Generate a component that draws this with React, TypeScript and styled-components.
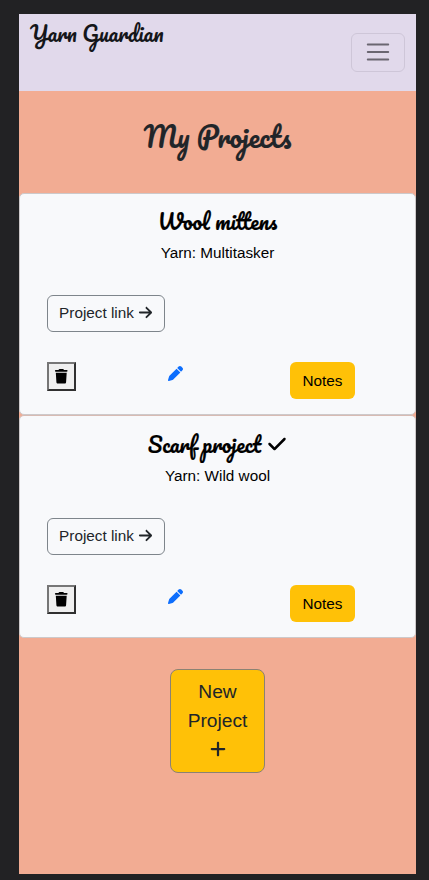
import React from 'react';
import styled, { createGlobalStyle } from 'styled-components';
import { FaArrowRight, FaCheck, FaPen, FaPlus, FaTrash } from 'react-icons/fa6';

const GlobalStyle = createGlobalStyle`
  *, *::before, *::after { box-sizing: border-box; }
  body {
    margin: 0;
    background: #222224;
    font-family: 'Liberation Sans', Arial, sans-serif;
    font-size: 15.3px;
    line-height: 22px;
    color: #212529;
  }
  h1, h2, p { margin: 0; }
  button, a { font: inherit; color: inherit; text-decoration: none; }
`;

const Frame = styled.div`
  height: 880px;
  padding: 14px 13px 6px 19px;
`;

const Page = styled.div`
  height: 100%;
  display: flex;
  flex-direction: column;
  background: #f2ac93;
`;

const Navbar = styled.nav`
  height: 77px;
  flex: none;
  display: flex;
  justify-content: space-between;
  padding: 0 11px;
  background: #e1d9eb;
`;

const Script = styled.span<{ $size: number; $stroke: number }>`
  font-family: Pacifico, cursive;
  font-weight: 400;
  font-size: ${p => p.$size}px;
  -webkit-text-stroke: ${p => p.$stroke}px currentColor;
  white-space: nowrap;
`;

const Brand = styled.a`
  height: 40px;
  line-height: 39px;
  color: #15161a;
`;

const Toggler = styled.button`
  width: 54px;
  height: 39px;
  margin-top: 19px;
  padding: 0 0 1px;
  display: flex;
  align-items: center;
  justify-content: center;
  background: transparent;
  border: 1px solid #cec6d8;
  border-radius: 6px;
`;

const Heading = styled.h1`
  height: 102px;
  flex: none;
  line-height: 91px;
  text-align: center;
`;

const CardTitle = styled.h2`
  height: 30px;
  margin-top: 12px;
  line-height: 30px;
  display: flex;
  align-items: center;
  justify-content: center;
  gap: 6px;
`;

const Card = styled.article`
  height: 222px;
  flex: none;
  display: flex;
  flex-direction: column;
  background: #f8f9fb;
  border: 1px solid #cdc9ca;
  border-radius: 5px;
  color: #000;

  & + & {
    height: 223px;
    border-top-color: #d8bbb3;
  }
  & + & ${CardTitle} {
    margin-top: 13px;
  }
`;

const Yarn = styled.p`
  height: 22px;
  margin-top: 6px;
  text-align: center;
`;

const LinkButton = styled.a`
  width: 118px;
  height: 37px;
  margin: 31px 0 0 27px;
  padding-bottom: 2px;
  display: flex;
  align-items: center;
  justify-content: center;
  gap: 4px;
  border: 1px solid #7e858b;
  border-radius: 6px;
  color: #212529;
`;

const Actions = styled.div`
  display: grid;
  grid-template-columns: 121px 122px 65px;
  align-items: start;
  margin: 30px 0 0 27px;
`;

const DeleteButton = styled.button`
  width: 29px;
  height: 29px;
  padding: 0;
  display: flex;
  align-items: center;
  justify-content: center;
  background: #efefef;
  border: 2px solid;
  border-color: #767676 #303030 #303030 #767676;
  color: #000;
`;

const EditLink = styled.a`
  height: 22px;
  display: flex;
  align-items: center;
  color: #0d6efd;
`;

const NotesButton = styled.button`
  height: 37px;
  padding: 0;
  border: 0;
  border-radius: 6px;
  background: #ffc107;
  color: #000;
`;

const NewButton = styled.button`
  width: 95px;
  height: 104px;
  align-self: center;
  margin-top: 31px;
  padding: 7px 0;
  display: flex;
  flex-direction: column;
  align-items: center;
  background: #ffc107;
  border: 1px solid #8b8273;
  border-radius: 8px;
  font-size: 19.2px;
  line-height: 29px;
`;

const IconLine = styled.span`
  height: 27px;
  display: flex;
  align-items: center;
`;

type Project = { name: string; yarn: string; done: boolean };

const projects: Project[] = [
  { name: 'Wool mittens', yarn: 'Multitasker', done: false },
  { name: 'Scarf project', yarn: 'Wild wool', done: true },
];

function ProjectCard({ project }: { project: Project }) {
  return (
    <Card>
      <CardTitle>
        <Script $size={20.9} $stroke={0.15}>{project.name}</Script>
        {project.done && <FaCheck size={20} />}
      </CardTitle>
      <Yarn>Yarn: {project.yarn}</Yarn>
      <LinkButton href="#">Project link <FaArrowRight size={15} /></LinkButton>
      <Actions>
        <DeleteButton aria-label="Delete"><FaTrash size={14.5} /></DeleteButton>
        <EditLink href="#" aria-label="Edit"><FaPen size={15} /></EditLink>
        <NotesButton>Notes</NotesButton>
      </Actions>
    </Card>
  );
}

export default function App() {
  return (
    <>
      <GlobalStyle />
      <Frame>
        <Page>
          <Navbar>
            <Brand href="#"><Script $size={20.8} $stroke={0}>Yarn Guardian</Script></Brand>
            <Toggler aria-label="Menu">
              <svg width="28" height="28" viewBox="0 0 30 30" fill="none" stroke="#6a6671" strokeWidth="2" strokeLinecap="round">
                <path d="M4 7h22M4 15h22M4 23h22" />
              </svg>
            </Toggler>
          </Navbar>
          <Heading><Script $size={27.3} $stroke={0.15}>My Projects</Script></Heading>
          {projects.map(p => <ProjectCard key={p.name} project={p} />)}
          <NewButton>
            <span>New</span>
            <span>Project</span>
            <IconLine><FaPlus size={18} /></IconLine>
          </NewButton>
        </Page>
      </Frame>
    </>
  );
}
